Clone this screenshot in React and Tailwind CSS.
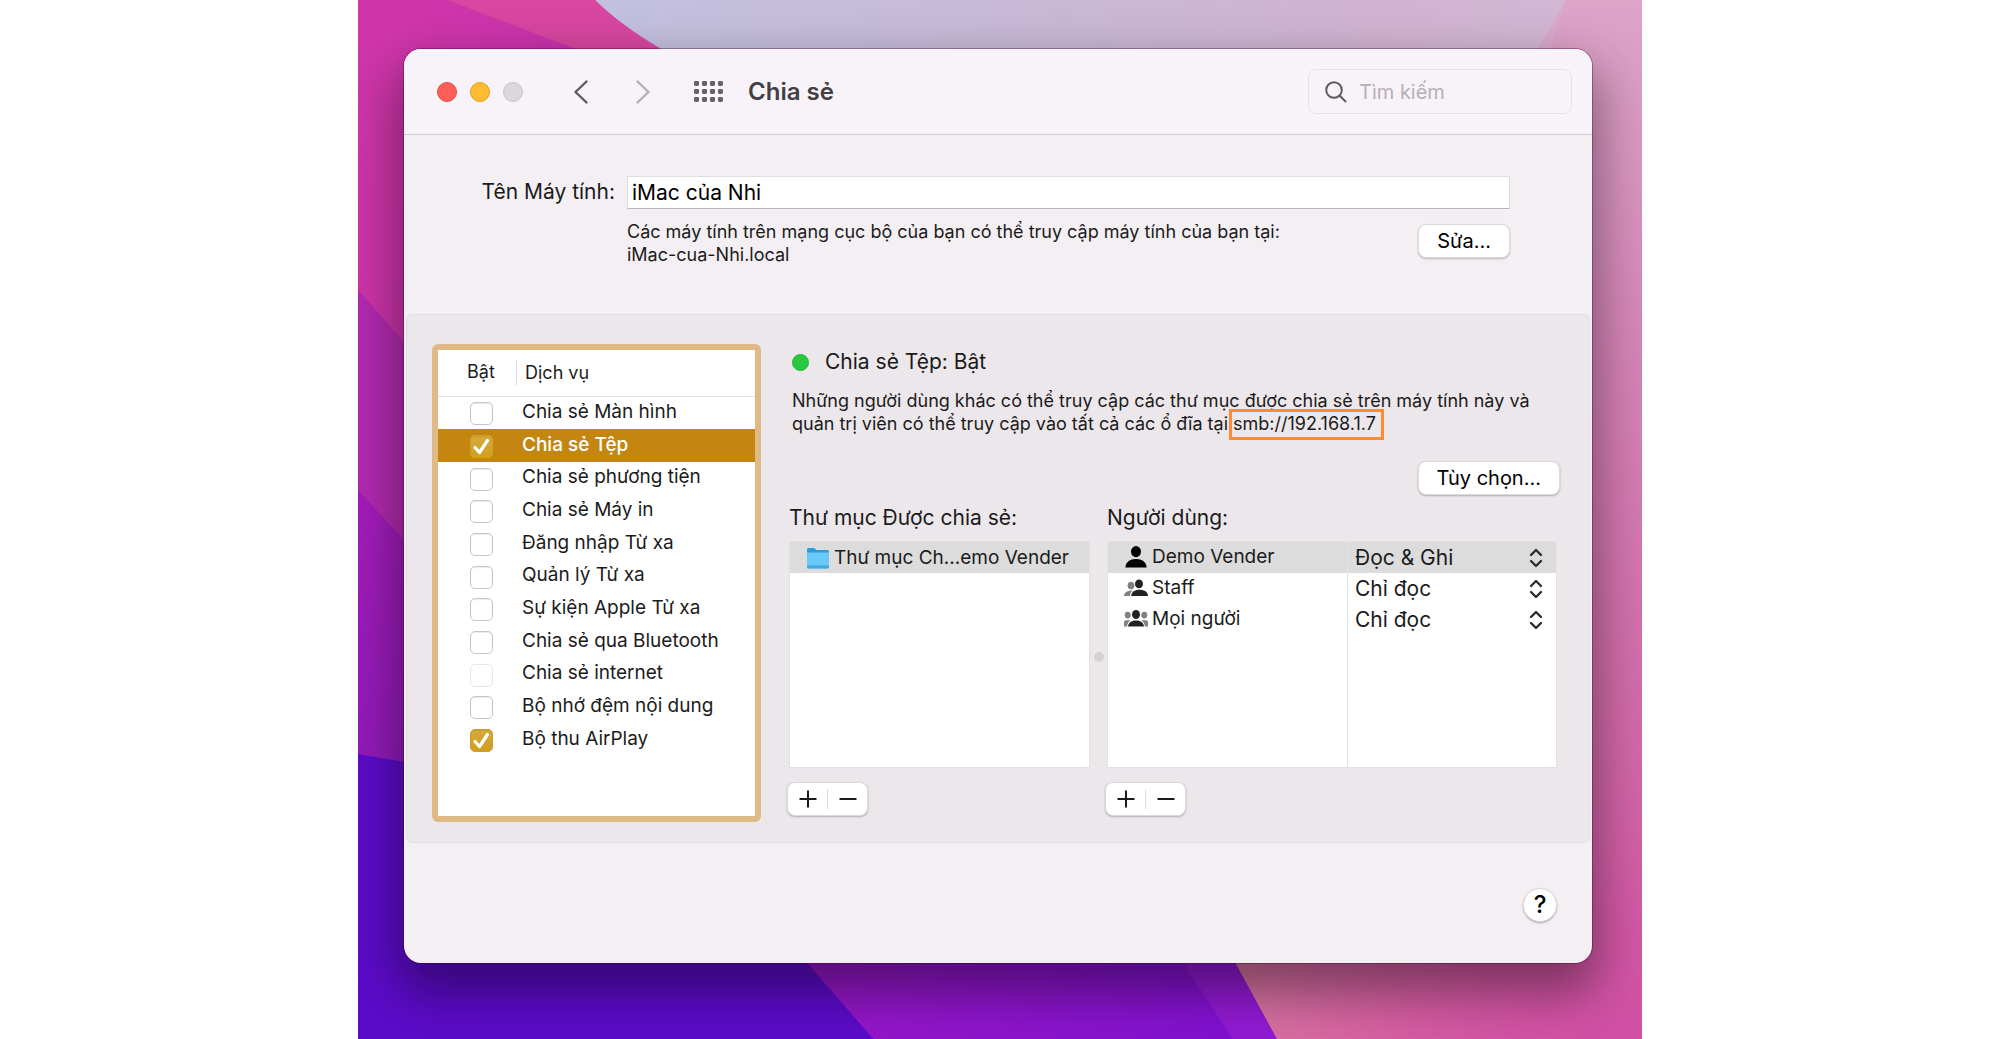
import React from 'react';

const services = [
  { name: 'Chia sẻ Màn hình' },
  { name: 'Chia sẻ Tệp', on: true, selected: true },
  { name: 'Chia sẻ phương tiện' },
  { name: 'Chia sẻ Máy in' },
  { name: 'Đăng nhập Từ xa' },
  { name: 'Quản lý Từ xa' },
  { name: 'Sự kiện Apple Từ xa' },
  { name: 'Chia sẻ qua Bluetooth' },
  { name: 'Chia sẻ internet', disabled: true },
  { name: 'Bộ nhớ đệm nội dung' },
  { name: 'Bộ thu AirPlay', on: true },
];

const Wallpaper = () => (
  <svg className="absolute inset-0 w-full h-full" viewBox="0 0 1283 1039" preserveAspectRatio="none" aria-hidden="true">
    <defs>
      <linearGradient id="magenta" x1="0" y1="0" x2="0" y2="1">
        <stop offset="0" stopColor="#d036aa" />
        <stop offset="1" stopColor="#c22ea6" />
      </linearGradient>
      <linearGradient id="topMagenta" x1="0" y1="0" x2="1" y2="0">
        <stop offset="0" stopColor="#d036aa" stopOpacity="0" />
        <stop offset="1" stopColor="#bd2cb0" />
      </linearGradient>
      <linearGradient id="lavender" x1="0" y1="0" x2="1" y2="0">
        <stop offset="0" stopColor="#c2c0df" />
        <stop offset="0.45" stopColor="#c8b8d6" />
        <stop offset="0.75" stopColor="#d2b2d2" />
        <stop offset="1" stopColor="#d3b8d6" />
      </linearGradient>
      <linearGradient id="rightPink" x1="0" y1="0" x2="0" y2="1">
        <stop offset="0" stopColor="#dda4c8" />
        <stop offset="0.35" stopColor="#d684b8" />
        <stop offset="0.75" stopColor="#d366a8" />
        <stop offset="1" stopColor="#d24fa4" />
      </linearGradient>
      <linearGradient id="bottomPink" x1="0" y1="0" x2="1" y2="0">
        <stop offset="0" stopColor="#da7ca0" />
        <stop offset="0.5" stopColor="#d65fa2" stopOpacity="0.8" />
        <stop offset="1" stopColor="#d24fa4" stopOpacity="0" />
      </linearGradient>
      <linearGradient id="violet" x1="0" y1="0" x2="1" y2="0">
        <stop offset="0" stopColor="#9a18c8" />
        <stop offset="1" stopColor="#8010d2" />
      </linearGradient>
      <linearGradient id="strip" x1="0" y1="0" x2="0" y2="1">
        <stop offset="0" stopColor="#a41cb9" />
        <stop offset="1" stopColor="#8e1ab9" />
      </linearGradient>
    </defs>
    <rect width="1283" height="1039" fill="url(#magenta)" />
    <path d="M0 0H89L218 49L300 90H0Z" fill="url(#topMagenta)" />
    <path d="M89 0H237Q265 28 303 49L400 110L330 95L218 49Z" fill="#d7469f" />
    <path d="M237 0H1283V200H500Q360 90 303 49Q262 25 237 0Z" fill="url(#lavender)" />
    <path d="M1207 0H1283V1039H640V300L1180 70Z" fill="url(#rightPink)" />
    <path d="M1207 0L1173 60H1188Z" fill="#d8a9cd" />
    <path d="M831 880H1283V1039H918Z" fill="url(#bottomPink)" />
    <path d="M0 290L46 342L200 450V700H0Z" fill="#b22ab0" />
    <path d="M0 490L46 540L200 650V800H0Z" fill="url(#strip)" />
    <path d="M400 880H831L876 962L918 1039H400Z" fill="url(#violet)" />
    <path d="M776 880H831L876 962L918 1039H874L824 962Z" fill="#921ad4" />
    <path d="M0 754L46 762L400 880L448 962L515 1039H0Z" fill="#5c0bc9" />
  </svg>
);

const Chevron = ({ flip }) => (
  <svg className="w-4 h-6" viewBox="0 0 16 24" fill="none" stroke="currentColor" strokeWidth="2.4" strokeLinecap="round" strokeLinejoin="round">
    <path d={flip ? 'M2.5 1.5L13.5 12L2.5 22.5' : 'M13.5 1.5L2.5 12L13.5 22.5'} />
  </svg>
);

const GridDots = () => (
  <svg className="w-[30px] h-6" viewBox="0 0 30 24" fill="#666368">
    {[0, 8, 16, 24].map((x) =>
      [1, 9, 17].map((y) => <rect key={`${x}-${y}`} x={x} y={y} width="5" height="5" rx="1.4" />)
    )}
  </svg>
);

const FolderIcon = () => (
  <svg className="w-6 h-6" viewBox="0 0 24 24">
    <path d="M1 3.5Q1 2 2.5 2H8L10.5 4H21.5Q23 4 23 5.5V12H1Z" fill="#2b9fd6" />
    <path d="M1 6.5H23V21Q23 22.5 21.5 22.5H2.5Q1 22.5 1 21Z" fill="#69c9f8" />
    <path d="M1 19.5H23V21Q23 22.5 21.5 22.5H2.5Q1 22.5 1 21Z" fill="#3fa9e2" />
  </svg>
);

const PersonIcon = () => (
  <svg className="w-6 h-6" viewBox="0 0 24 24" fill="#000">
    <ellipse cx="12" cy="6.6" rx="5" ry="5.6" />
    <path d="M1.4 22.4C1.4 17.5 6 14 12 14S22.6 17.5 22.6 22.4Z" />
  </svg>
);

const PairIcon = () => (
  <svg className="w-6 h-6" viewBox="0 0 24 24">
    <ellipse cx="7" cy="9.5" rx="3.4" ry="3.8" fill="#808080" />
    <path d="M0 20C.3 16.7 3 14.300 8.500 14.500C6.700 16 6 17.700 6 20Z" fill="#808080" />
    <ellipse cx="15" cy="7.9" rx="4" ry="4.4" fill="#222" />
    <path d="M7.2 20C7.4 16 10.5 13.8 15.5 13.8S23.8 16 24 20Z" fill="#222" />
  </svg>
);

const GroupIcon = () => (
  <svg className="w-6 h-6" viewBox="0 0 24 24">
    <ellipse cx="3.7" cy="8.1" rx="3" ry="3.4" fill="#808080" />
    <ellipse cx="20.3" cy="8.1" rx="3" ry="3.4" fill="#808080" />
    <path d="M0 19.500V15Q0 13.200 2 13.200H6.500Q3.300 15.500 3 19.500Z" fill="#808080" />
    <path d="M24 19.500V15Q24 13.200 22 13.200H17.500Q20.700 15.500 21 19.500Z" fill="#808080" />
    <ellipse cx="12" cy="7.5" rx="4" ry="4.5" fill="#222" />
    <path d="M4 19.500C4.300 15.700 7.300 13.500 12 13.500S19.700 15.700 20 19.500Z" fill="#222" />
  </svg>
);

const UpDown = () => (
  <svg className="pointer-events-none absolute right-[13px] top-1.5 w-3.5 h-5" viewBox="0 0 14 20" fill="none" stroke="#2f2f2f" strokeWidth="2.4" strokeLinecap="round" strokeLinejoin="round">
    <path d="M2 7L7 2L12 7M2 13L7 18L12 13" />
  </svg>
);

const users = [
  { name: 'Demo Vender', access: 'Đọc & Ghi', Icon: PersonIcon, selected: true },
  { name: 'Staff', access: 'Chỉ đọc', Icon: PairIcon },
  { name: 'Mọi người', access: 'Chỉ đọc', Icon: GroupIcon },
];

const PushButton = ({ children }) => (
  <button className="h-[34px] px-[18px] rounded-lg bg-white text-[20px] leading-6 text-black border border-[#dcd8dc] shadow-[0_1px_2px_rgba(0,0,0,0.25)]">
    {children}
  </button>
);

const AddRemove = () => (
  <div className="mt-3.5 -ml-0.5 flex items-center w-[81px] h-[34px] rounded-lg bg-white border border-[#dcd8dc] shadow-[0_1px_2px_rgba(0,0,0,0.25)]">
    <button aria-label="Thêm" className="flex-1 flex justify-center">
      <svg className="w-[18px] h-[18px]" viewBox="0 0 18 18" stroke="#1a1a1a" strokeWidth="2">
        <path d="M9 0.5V17.5M0.5 9H17.5" />
      </svg>
    </button>
    <span className="w-px h-5 bg-[#dedede]" />
    <button aria-label="Xóa" className="flex-1 flex justify-center">
      <svg className="w-[18px] h-[18px]" viewBox="0 0 18 18" stroke="#1a1a1a" strokeWidth="2">
        <path d="M0.5 9H17.5" />
      </svg>
    </button>
  </div>
);

const Checkbox = ({ id, service }) => (
  <span className="relative block w-[23px] h-[23px]">
    <input
      id={id}
      type="checkbox"
      defaultChecked={service.on}
      disabled={service.disabled}
      className="peer block appearance-none w-[23px] h-[23px] rounded-[5px] border border-[#c6c6c6] bg-white shadow-[inset_0_1px_1px_rgba(0,0,0,0.08)] disabled:border-[#e6e6e6] disabled:shadow-none checked:border-[#cfa02b] checked:bg-linear-to-b checked:from-[#d6ab3c] checked:to-[#cf9f1e]"
    />
    <svg className="hidden peer-checked:block pointer-events-none absolute inset-0 w-[23px] h-[23px]" viewBox="0 0 23 23" fill="none" stroke="#fff" strokeWidth="3.2" strokeLinecap="round" strokeLinejoin="round">
      <path d="M5 12.5L9.5 17.5L17.5 5.5" />
    </svg>
  </span>
);

const ServiceList = () => (
  <div className="shrink-0 w-[329px] h-[478px] border-6 border-[#e0ba86] rounded-md bg-white">
    <table className="w-full h-[406px] border-collapse text-left text-[#1b1b1b]">
      <thead>
        <tr className="h-[46px] border-b border-[#e1e1e1] text-[18px] leading-6">
          <th className="w-[79px] p-0 font-normal">
            <div className="h-[26px] border-r border-[#dedede] pl-[29px]">Bật</div>
          </th>
          <th className="p-0 pl-2 font-normal">Dịch vụ</th>
        </tr>
      </thead>
      <tbody className="text-[19px] leading-6">
        {services.map((service, index) => (
          <tr key={service.name} className={service.selected ? 'bg-[#c58611] text-white font-medium' : ''}>
            <td className="p-0 pt-0.5 pl-8">
              <Checkbox id={`service-${index}`} service={service} />
            </td>
            <td className="p-0 pl-[5px] pb-0.5">
              <label htmlFor={`service-${index}`}>{service.name}</label>
            </td>
          </tr>
        ))}
      </tbody>
    </table>
  </div>
);

const UserTable = () => (
  <table aria-labelledby="users-label" className="mt-[9px] w-full h-[227px] bg-white border border-[#e2e0e2] border-collapse">
    <tbody>
      {users.map(({ name, access, Icon, selected }) => (
        <tr key={name} className={selected ? 'h-[31px] bg-[#dcdcdc]' : 'h-[31px]'}>
          <td className="p-0 w-[240px] border-r border-[#e2e2e2]">
            <div className="flex items-center gap-1 pl-4 text-[19px] leading-6">
              <Icon />
              {name}
            </div>
          </td>
          <td className="p-0">
            <div className="relative">
              <select aria-label={name} defaultValue={access} className="block w-full appearance-none bg-transparent pt-0.5 pl-[7px] text-[21px] leading-7">
                <option>Đọc & Ghi</option>
                <option>Chỉ đọc</option>
              </select>
              <UpDown />
            </div>
          </td>
        </tr>
      ))}
      <tr>
        <td className="border-r border-[#e2e2e2]" />
        <td />
      </tr>
    </tbody>
  </table>
);

const App = () => {
  return (
    <div className="min-h-screen bg-white flex justify-center font-['Inter','Liberation_Sans',sans-serif] text-[#1b1b1b]">
      <div className="relative w-[64.2%] min-h-screen overflow-hidden pt-[49px] pb-[76px] pl-[46px] pr-[50px]">
        <Wallpaper />
        <main className="relative rounded-[17px] bg-[#f4eff3] overflow-hidden shadow-[0_0_0_1px_rgba(60,0,60,0.35),0_24px_50px_6px_rgba(0,0,0,0.42)]">
          <header className="h-[86px] flex items-center bg-[#f8f2f9] border-b border-[#d0cbd1] pl-[33px] pr-5">
            <div className="flex gap-[13px]">
              <button aria-label="Đóng" className="w-5 h-5 rounded-full bg-[#ff5f57] border border-[#e24b42]" />
              <button aria-label="Thu nhỏ" className="w-5 h-5 rounded-full bg-[#febc2e] border border-[#e0a028]" />
              <button aria-label="Phóng to" className="w-5 h-5 rounded-full bg-[#dcd7dd] border border-[#c8c3c9]" />
            </div>
            <button aria-label="Quay lại" className="ml-[50px] text-[#5d5a5e]"><Chevron /></button>
            <button aria-label="Tiếp" className="ml-[46px] text-[#b3afb4]"><Chevron flip /></button>
            <button aria-label="Hiển thị tất cả" className="ml-[43px]"><GridDots /></button>
            <h1 className="ml-6 text-[24px] leading-8 font-semibold text-[#434044]">Chia sẻ</h1>
            <label className="ml-auto w-[264px] h-[45px] flex items-center gap-3 rounded-lg border border-[#e6e0e7] px-4">
              <svg className="shrink-0 w-[22px] h-[22px]" viewBox="0 0 22 22" fill="none" stroke="#5f5b60" strokeWidth="2" strokeLinecap="round">
                <circle cx="9" cy="9" r="7.8" />
                <path d="M14.8 14.8L20.5 20.5" />
              </svg>
              <input type="search" aria-label="Tìm kiếm" placeholder="Tìm kiếm" className="min-w-0 flex-1 bg-transparent text-[20px] leading-7 placeholder:text-[#b5b0b6]" />
            </label>
          </header>

          <section className="h-[179px] flex pt-[41px] pr-[82px]">
            <label htmlFor="computer-name" className="shrink-0 w-[223px] pr-3 text-right text-[21px] leading-8">Tên Máy tính:</label>
            <div className="flex-1">
              <input id="computer-name" defaultValue="iMac của Nhi" className="block w-full h-[33px] bg-white border border-[#e2dde2] border-b-[#b9b4b9] px-1 text-[21px] leading-7 text-black" />
              <div className="mt-[11px] flex justify-between items-start">
                <p className="text-[18px] leading-[23px]">
                  Các máy tính trên mạng cục bộ của bạn có thể truy cập máy tính của bạn tại:<br />
                  iMac-cua-Nhi.local
                </p>
                <div className="mt-1"><PushButton>Sửa...</PushButton></div>
              </div>
            </div>
          </section>

          <section className="mx-0.5 flex gap-7 rounded-md border border-[#e3dee3] bg-[#ece7eb] pt-[29px] pb-5 pl-[25px] pr-[29px]">
            <ServiceList />
            <div className="min-w-0 flex-1">
              <h2 className="flex items-center gap-4 pl-[3px] text-[21px] leading-9">
                <span className="w-[17px] h-[17px] rounded-full bg-[#28c840] border border-[#22b838]" />
                Chia sẻ Tệp: Bật
              </h2>
              <p className="mt-[9px] pl-[3px] text-[18px] leading-[23px] whitespace-nowrap">
                Những người dùng khác có thể truy cập các thư mục được chia sẻ trên máy tính này và<br />
                quản trị viên có thể truy cập vào tất cả các ổ đĩa tại{' '}
                <a href="smb://192.168.1.7" className="relative">
                  smb://192.168.1.7
                  <span className="absolute -left-1 -right-2 -top-1 -bottom-1.5 border-3 border-[#ff8a35]" />
                </a>
              </p>
              <div className="mt-[26px] flex justify-end"><PushButton>Tùy chọn...</PushButton></div>
              <div className="mt-[9px] pr-[3px] flex">
                <div className="flex-[301] min-w-0">
                  <h3 className="text-[21px] leading-7">Thư mục Được chia sẻ:</h3>
                  <ul className="mt-[9px] h-[227px] bg-white border border-[#e2e0e2]">
                    <li className="h-[31px] flex items-center gap-1 pl-4 bg-[#dcdcdc] text-[19px] leading-6 whitespace-nowrap">
                      <FolderIcon />
                      Thư mục Ch...emo Vender
                    </li>
                  </ul>
                  <AddRemove />
                </div>
                <div className="w-[17px] shrink-0 pt-[148px] pl-1">
                  <div className="w-2.5 h-2.5 rounded-full bg-[#d5d0d4]" />
                </div>
                <div className="flex-[450] min-w-0">
                  <h3 id="users-label" className="text-[21px] leading-7">Người dùng:</h3>
                  <UserTable />
                  <AddRemove />
                </div>
              </div>
            </div>
          </section>

          <footer className="h-[120px] flex items-start justify-end pt-[45px] pr-[35px]">
            <button aria-label="Trợ giúp" className="w-[34px] h-[34px] rounded-full bg-white border border-[#dcd8dc] shadow-[0_1px_2px_rgba(0,0,0,0.3)] text-[24px] leading-8 font-medium text-black">?</button>
          </footer>
        </main>
      </div>
    </div>
  );
};

export default App;
